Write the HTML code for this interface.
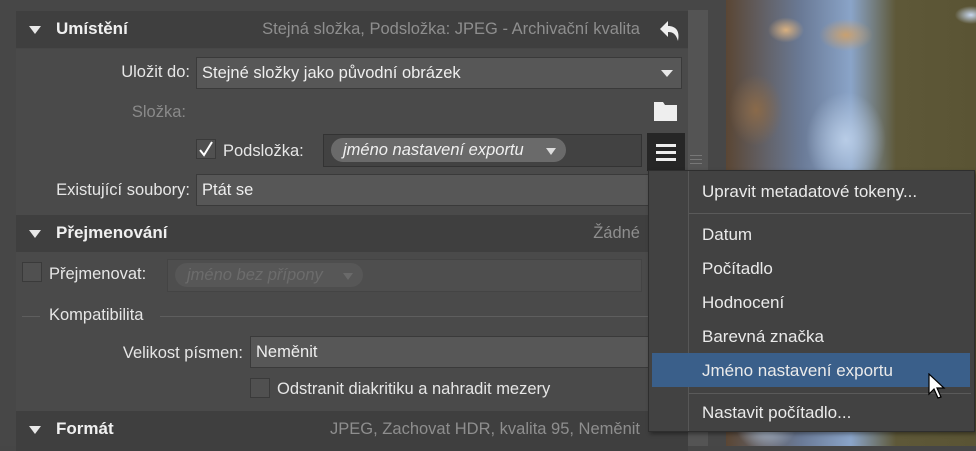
<!DOCTYPE html>
<html><head><meta charset="utf-8"><style>
*{margin:0;padding:0;box-sizing:border-box}
body{width:976px;height:446px;overflow:hidden;background:#464646;position:relative;font-family:"Liberation Sans",sans-serif;font-size:16.5px;color:#e6e6e6}
.a{position:absolute}
.hdr{position:absolute;left:16px;width:672px;height:37px;background:#3f3f3f}
.hdr .t{position:absolute;left:40px;top:8px;font-weight:bold;font-size:17px;color:#f0f0f0}
.hdr .tri{position:absolute;left:13px;top:15px;width:0;height:0;border-left:6px solid transparent;border-right:6px solid transparent;border-top:8px solid #e8e8e8}
.hdr .s{position:absolute;right:48px;top:9px;color:#8e8e8e;font-size:16.5px}
.dd{position:absolute;height:32px;background:#575757;border:1px solid #3a3a3a;padding:6px 5px;color:#eee}
.lbl{position:absolute;text-align:right;color:#e6e6e6;white-space:nowrap}
.cb{position:absolute;width:20px;height:20px;background:#505050;border:1px solid #3a3a3a}
.pill{position:absolute;height:24px;border-radius:12px;background:#6a6a6a;font-style:italic;padding:3px 12px;color:#f0f0f0}
.dt{position:absolute;width:0;height:0;border-left:6px solid transparent;border-right:6px solid transparent;border-top:7px solid #e8e8e8}
.menu{position:absolute;left:648px;top:170px;width:327px;height:262px;background:#424242;border:1px solid #2e2e2e;font-family:"Liberation Sans",sans-serif;font-size:17px;color:#eaeaea;box-shadow:2px 2px 4px rgba(0,0,0,.4)}
.menu .i{position:absolute;left:53px}
.menu .sep{position:absolute;left:40px;right:3px;height:1px;background:#5a5a5a}
</style></head><body>
<div class="a" style="left:726px;top:0;width:250px;height:446px;background:
radial-gradient(ellipse 20px 14px at 60px 30px,#d8b080 0,transparent 90%),
radial-gradient(ellipse 30px 18px at 120px 35px,#c8a070 0,transparent 90%),
radial-gradient(ellipse 30px 40px at 30px 110px,#8a6a4a 0,transparent 90%),
radial-gradient(ellipse 18px 10px at 245px 15px,#c8d8f0 0,transparent 90%),
radial-gradient(ellipse 50px 60px at 120px 140px,#b8cce6 0,transparent 80%),
radial-gradient(ellipse 40px 80px at 80px 300px,#a8c0e0 0,transparent 80%),
radial-gradient(ellipse 40px 40px at 40px 420px,#c0d4ec 0,transparent 80%),
linear-gradient(90deg,#5a4634 0,#6a7a96 30%,#8aa4c8 50%,#5e5838 68%,#5a5434 100%)"></div>
<div class="a" style="left:0;top:0;width:726px;height:446px;background:#474747"></div>
<div class="a" style="left:688px;top:10px;width:20px;height:436px;background:#545454"></div>
<div class="a" style="left:16px;top:49px;width:672px;height:397px;background:#4a4a4a"></div>

<div class="hdr" style="top:11px"><div class="tri"></div><div class="t">Umístění</div><div class="s">Stejná složka, Podsložka: JPEG - Archivační kvalita</div>
<svg class="a" style="left:642px;top:9px" width="24" height="22" viewBox="0 0 24 22"><path d="M2 9 L10 1 V6 C18 6 22 11 20 21 C18 14 15 12 10 12 V17 Z" fill="#eee"/></svg></div>

<div class="lbl" style="left:40px;width:150px;top:63px">Uložit do:</div>
<div class="dd" style="left:196px;top:57px;width:486px">Stejné složky jako původní obrázek</div>
<div class="dt" style="left:661px;top:70px"></div>

<div class="lbl" style="left:40px;width:146px;top:103px;color:#8a8a8a">Složka:</div>
<svg class="a" style="left:654px;top:102px" width="24" height="20"><path d="M0 0H9L11 3H23V19H0Z" fill="#eee"/></svg>

<div class="cb" style="left:196px;top:139px"></div>
<svg class="a" style="left:197px;top:140px" width="18" height="18"><path d="M3 10L7 15L15 2" stroke="#fff" stroke-width="2" fill="none"/></svg>
<div class="a" style="left:223px;top:142px">Podsložka:</div>
<div class="a" style="left:323px;top:134px;width:319px;height:33px;background:#424242;border:1px solid #333"></div>
<div class="pill" style="left:331px;top:138px;width:235px">jméno nastavení exportu</div>
<div class="dt" style="left:546px;top:148px;border-top-color:#ddd;border-left-width:5px;border-right-width:5px"></div>
<div class="a" style="left:647px;top:133px;width:38px;height:38px;background:#262626"></div>
<div class="a" style="left:656px;top:144px;width:20px;height:3px;background:#eee;box-shadow:0 7px 0 #eee,0 14px 0 #eee"></div>
<div class="a" style="left:690px;top:155px;width:12px;height:1px;background:#777;box-shadow:0 4px 0 #777,0 8px 0 #777"></div>

<div class="lbl" style="left:20px;width:170px;top:181px">Existující soubory:</div>
<div class="dd" style="left:196px;top:174px;width:460px">Ptát se</div>

<div class="hdr" style="top:215px"><div class="tri"></div><div class="t">Přejmenování</div><div class="s" style="right:48px">Žádné</div></div>

<div class="cb" style="left:22px;top:262px"></div>
<div class="a" style="left:49px;top:265px">Přejmenovat:</div>
<div class="a" style="left:167px;top:259px;width:475px;height:33px;background:#4e4e4e;border:1px solid #444"></div>
<div class="pill" style="left:175px;top:263px;width:188px;background:#575757;color:#6c6c6c">jméno bez přípony</div>
<div class="dt" style="left:343px;top:273px;border-top-color:#6a6a6a;border-left-width:5px;border-right-width:5px"></div>

<div class="a" style="left:22px;top:316px;width:18px;height:1px;background:#5e5e5e"></div>
<div class="a" style="left:49px;top:306px">Kompatibilita</div>
<div class="a" style="left:160px;top:316px;width:500px;height:1px;background:#5e5e5e"></div>

<div class="lbl" style="left:80px;width:163px;top:344px">Velikost písmen:</div>
<div class="dd" style="left:250px;top:336px;width:410px">Neměnit</div>
<div class="cb" style="left:250px;top:378px"></div>
<div class="a" style="left:277px;top:380px">Odstranit diakritiku a nahradit mezery</div>

<div class="hdr" style="top:411px;height:40px"><div class="tri"></div><div class="t">Formát</div><div class="s" style="right:48px">JPEG, Zachovat HDR, kvalita 95, Neměnit</div></div>

<div class="menu">
<div class="a" style="left:39px;top:0;width:1px;height:260px;background:#575757"></div>
<div class="i" style="top:11px">Upravit metadatové tokeny...</div>
<div class="sep" style="top:42px"></div>
<div class="i" style="top:54px">Datum</div>
<div class="i" style="top:88px">Počítadlo</div>
<div class="i" style="top:122px">Hodnocení</div>
<div class="i" style="top:156px">Barevná značka</div>
<div class="a" style="left:3px;top:182px;width:318px;height:34px;background:#3a5f8a"></div>
<div class="i" style="top:190px">Jméno nastavení exportu</div>
<div class="sep" style="top:222px"></div>
<div class="i" style="top:232px">Nastavit počítadlo...</div>
</div>
<svg class="a" style="left:928px;top:373px" width="18" height="28" viewBox="0 0 18 28"><path d="M1 1V21L6 16L10 25L13 24L9 15H16Z" fill="#fff" stroke="#000" stroke-width="1.2"/></svg>
</body></html>
